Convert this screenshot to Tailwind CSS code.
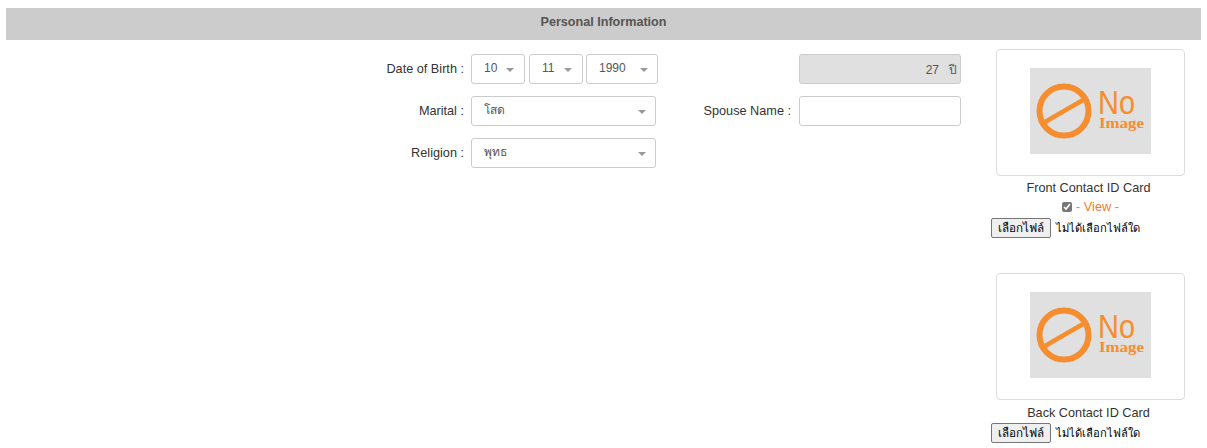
<!DOCTYPE html>
<html lang="th">
<head>
  <meta charset="UTF-8" />
  <title>Personal Information</title>
  <script src="https://cdn.jsdelivr.net/npm/@tailwindcss/browser@4"></script>
</head>
<body class="bg-white text-[12.7px] text-[#333] font-['Liberation_Sans','Noto_Sans',sans-serif]">
  <div class="px-[6px] pt-2">
    <!-- Header -->
    <div class="h-8 bg-[#ccc] flex items-center justify-center text-[12.6px] font-bold text-[#555] pb-[3px]">Personal Information</div>

    <div class="flex">
      <!-- Form -->
      <div class="w-[955px] pt-[14px] flex flex-col gap-3">
        <div class="flex h-[30px]">
          <label class="w-[465px] pr-[7px] text-right leading-[30px]">Date of Birth :</label>
          <div class="flex text-[12px]">
            <div class="w-[54px] h-[30px] border border-[#ccc] rounded-[3px] flex items-center justify-between pl-3 pr-[10px] text-[#555] pb-[2px]"><span>10</span><span class="w-0 h-0 mt-1 border-x-[4px] border-x-transparent border-t-[4px] border-t-[#999]"></span></div>
            <div class="w-[54px] h-[30px] ml-1 border border-[#ccc] rounded-[3px] flex items-center justify-between pl-3 pr-[10px] text-[#555] pb-[2px]"><span>11</span><span class="w-0 h-0 mt-1 border-x-[4px] border-x-transparent border-t-[4px] border-t-[#999]"></span></div>
            <div class="w-[72px] h-[30px] ml-[3px] border border-[#ccc] rounded-[3px] flex items-center justify-between pl-3 pr-[9px] text-[#555] pb-[2px]"><span>1990</span><span class="w-0 h-0 mt-1 border-x-[4px] border-x-transparent border-t-[4px] border-t-[#999]"></span></div>
          </div>
          <div class="ml-[141px] w-[162px] h-[30px] bg-[#e0e0e0] border border-[#ccc] rounded-[3px] flex items-center justify-end gap-[10px] pr-[3px] pt-[1px] text-[12px] text-[#555]"><span>27</span><span>ปี</span></div>
        </div>
        <div class="flex h-[30px]">
          <label class="w-[465px] pr-[7px] text-right leading-[30px]">Marital :</label>
          <div class="w-[185px] h-[30px] border border-[#ccc] rounded-[3px] flex items-center justify-between pl-3 pr-[9px] text-[12px] text-[#555] pb-[2px]"><span>โสด</span><span class="w-0 h-0 mt-1 border-x-[4px] border-x-transparent border-t-[4px] border-t-[#999]"></span></div>
          <label class="w-[143px] pr-[8px] text-right leading-[30px]">Spouse Name :</label>
          <div class="w-[162px] h-[30px] border border-[#ccc] rounded-[3px]"></div>
        </div>
        <div class="flex h-[30px]">
          <label class="w-[465px] pr-[7px] text-right leading-[30px]">Religion :</label>
          <div class="w-[185px] h-[30px] border border-[#ccc] rounded-[3px] flex items-center justify-between pl-3 pr-[9px] text-[12px] text-[#555] pb-[2px]"><span>พุทธ</span><span class="w-0 h-0 mt-1 border-x-[4px] border-x-transparent border-t-[4px] border-t-[#999]"></span></div>
        </div>
      </div>

      <!-- ID cards -->
      <div class="w-[204px] ml-[30px] pt-[9px]">
        <div class="ml-[5px] w-[189px] h-[127px] border border-[#ddd] rounded-[4px] flex items-center justify-center pb-[3px]">
          <svg width="121" height="86" viewBox="0 0 121 86">
            <rect width="121" height="86" fill="#e0e0e0" />
            <circle cx="34" cy="43" r="24.5" fill="none" stroke="#f68d2e" stroke-width="6" />
            <path d="M15 54 L53 32" stroke="#f68d2e" stroke-width="4.5" />
            <text x="68" y="46" font-family="Liberation Sans" font-size="33" fill="#f68d2e" textLength="37" lengthAdjust="spacingAndGlyphs">No</text>
            <text x="69" y="60" font-family="Liberation Serif" font-size="15" font-weight="bold" fill="#f68d2e" textLength="45" lengthAdjust="spacingAndGlyphs">Image</text>
          </svg>
        </div>
        <div class="ml-[3px] w-[189px] text-center mt-[5px] leading-[14px]">Front Contact ID Card</div>
        <div class="ml-[5px] w-[189px] flex items-center justify-center gap-[4px] mt-[6px] h-[13px]">
          <input type="checkbox" checked class="w-[10px] h-[10px] -mt-[2px] accent-[#777]" />
          <span class="text-[#ee7d2f]">- View -</span>
        </div>
        <div class="flex items-center gap-[5px] mt-[4px] h-5">
          <button class="w-[60px] h-[20px] bg-[#efefef] border border-[#767676] rounded-[2px] text-[11.6px] text-black">เลือกไฟล์</button>
          <span class="text-[11.2px] text-black">ไม่ได้เลือกไฟล์ใด</span>
        </div>

        <div class="ml-[5px] mt-[35px] w-[189px] h-[127px] border border-[#ddd] rounded-[4px] flex items-center justify-center pb-[3px]">
          <svg width="121" height="86" viewBox="0 0 121 86">
            <rect width="121" height="86" fill="#e0e0e0" />
            <circle cx="34" cy="43" r="24.5" fill="none" stroke="#f68d2e" stroke-width="6" />
            <path d="M15 54 L53 32" stroke="#f68d2e" stroke-width="4.5" />
            <text x="68" y="46" font-family="Liberation Sans" font-size="33" fill="#f68d2e" textLength="37" lengthAdjust="spacingAndGlyphs">No</text>
            <text x="69" y="60" font-family="Liberation Serif" font-size="15" font-weight="bold" fill="#f68d2e" textLength="45" lengthAdjust="spacingAndGlyphs">Image</text>
          </svg>
        </div>
        <div class="ml-[3px] w-[189px] text-center mt-[6px] leading-[14px]">Back Contact ID Card</div>
        <div class="flex items-center gap-[5px] mt-[3px] h-5">
          <button class="w-[60px] h-[20px] bg-[#efefef] border border-[#767676] rounded-[2px] text-[11.6px] text-black">เลือกไฟล์</button>
          <span class="text-[11.2px] text-black">ไม่ได้เลือกไฟล์ใด</span>
        </div>
      </div>
    </div>
  </div>
</body>
</html>
